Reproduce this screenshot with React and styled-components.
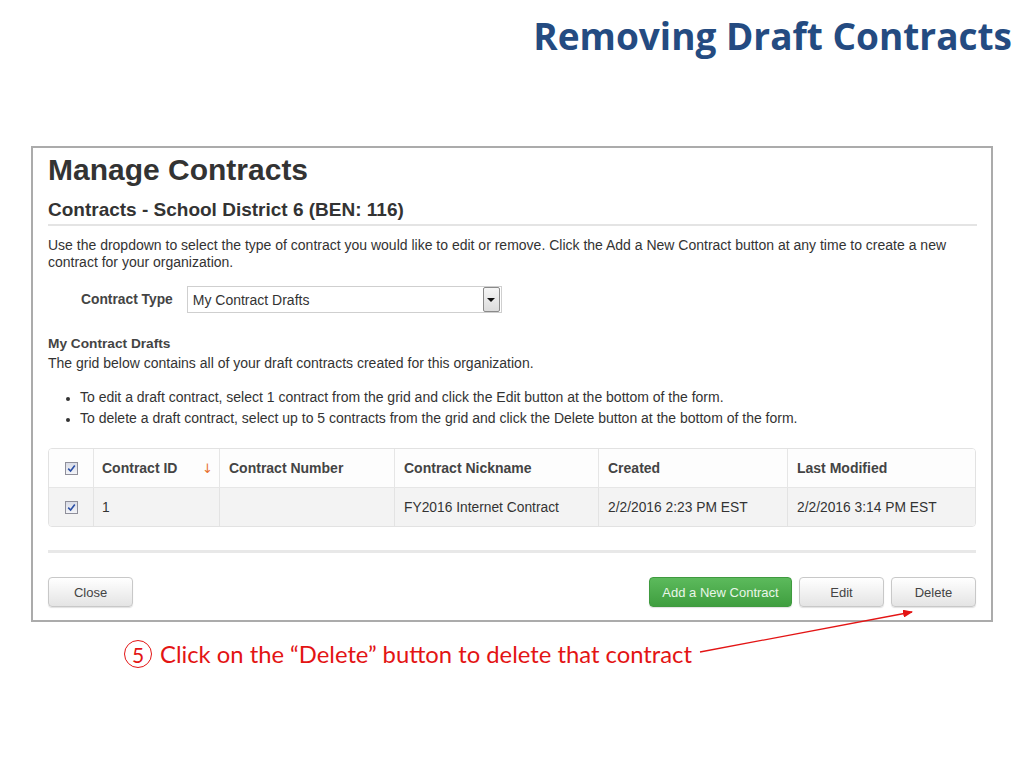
import React from 'react';
import styled, { createGlobalStyle } from 'styled-components';

const Global = createGlobalStyle`
  html, body { margin: 0; padding: 0; background: #fff; }
  body {
    width: 1024px; height: 768px; overflow: hidden;
    font-family: "Liberation Sans", Arial, sans-serif;
    color: #333;
  }
  * { box-sizing: border-box; }
`;

const Slide = styled.div`
  position: relative;
  width: 1024px;
  height: 768px;
  display: flex;
  flex-direction: column;
`;

const SlideTitle = styled.h1`
  margin: 0;
  padding: 14px 12px 0 0;
  text-align: right;
  font-family: "Open Sans", Lato, sans-serif;
  font-weight: 700;
  font-size: 37px;
  line-height: 43px;
  color: #244b81;
`;

const Frame = styled.div`
  margin: 89px 0 0 31px;
  width: 962px;
  height: 476px;
  border: 2px solid #ababab;
  padding: 5px 14px 0 15px;
  display: flex;
  flex-direction: column;
`;

const PageHeading = styled.h2`
  margin: 0;
  font-size: 30px;
  line-height: 34px;
  font-weight: 700;
  color: #333;
`;

const SubHeading = styled.h3`
  margin: 12px 0 0;
  font-size: 19px;
  line-height: 22px;
  font-weight: 700;
  color: #333;
  padding-bottom: 3px;
  border-bottom: 2px solid #e4e4e4;
`;

const Para = styled.p`
  margin: ${p => p.$mt || 0}px 0 0;
  font-size: 14px;
  line-height: 17px;
  color: #333;
`;

const TypeRow = styled.div`
  display: flex;
  align-items: center;
  gap: 14px;
  margin-top: 15px;
  padding-left: 33px;
`;

const FieldLabel = styled.label`
  font-size: 13.8px;
  font-weight: 700;
  color: #444;
`;

const SelectBox = styled.div`
  width: 315px;
  height: 27px;
  border: 1px solid #cfcfcf;
  display: flex;
  align-items: center;
  justify-content: space-between;
  padding: 0 1px 0 5px;
  font-size: 14px;
  color: #333;
  background: #fff;
`;

const SelectArrow = styled.span`
  width: 17px;
  height: 25px;
  border: 1px solid #8a8a8a;
  border-radius: 2px;
  background: linear-gradient(#f6f6f6, #dcdcdc);
  display: flex;
  align-items: center;
  justify-content: center;
  &::after {
    content: "";
    border-left: 4px solid transparent;
    border-right: 4px solid transparent;
    border-top: 4px solid #111;
  }
`;

const SectionTitle = styled.div`
  margin-top: 22px;
  font-size: 13.7px;
  line-height: 17px;
  font-weight: 700;
  color: #444;
`;

const BulletList = styled.ul`
  margin: 15px 0 0;
  padding: 0 0 0 32px;
  font-size: 14px;
  line-height: 21px;
  color: #333;
  li::marker { font-size: 12px; }
`;

const Table = styled.table`
  margin-top: 19px;
  width: 928px;
  border-collapse: separate;
  border-spacing: 0;
  border: 1px solid #e2e2e2;
  border-radius: 4px;
  table-layout: fixed;
  overflow: hidden;
`;

const Th = styled.th`
  height: 39px;
  padding: 0 0 0 ${p => p.$pl ?? 9}px;
  text-align: left;
  font-size: 14px;
  font-weight: 700;
  color: #444;
  background: #fdfdfd;
  border-left: ${p => (p.$first ? 'none' : '1px solid #e6e6e6')};
  border-bottom: 1px solid #e6e6e6;
`;

const Td = styled.td`
  height: 38px;
  padding: 0 0 0 ${p => p.$pl ?? 9}px;
  font-size: 13.8px;
  color: #333;
  background: #f3f3f3;
  border-left: ${p => (p.$first ? 'none' : '1px solid #e3e3e3')};
`;

const HeadInner = styled.div`
  display: flex;
  align-items: center;
  justify-content: space-between;
  padding-right: 6px;
`;

const SortArrow = styled.span`
  color: #e8702f;
  font-weight: 400;
  font-family: "DejaVu Sans", sans-serif;
  font-size: 13px;
`;

const CheckCell = styled.div`
  display: flex;
  justify-content: center;
  align-items: center;
`;

const Check = styled.span`
  width: 13px;
  height: 13px;
  border: 1px solid #8f8f9a;
  background: linear-gradient(#d9dce6, #f3f4f8);
  display: flex;
  align-items: center;
  justify-content: center;
`;

const Divider = styled.div`
  margin-top: 23px;
  height: 3px;
  width: 928px;
  background: #e8e8e8;
`;

const ButtonBar = styled.div`
  margin-top: 24px;
  width: 928px;
  display: flex;
  justify-content: space-between;
`;

const ButtonGroup = styled.div`
  display: flex;
  gap: 7px;
`;

const Button = styled.button`
  height: 30px;
  width: ${p => p.$w || 85}px;
  border-radius: 4px;
  border: 1px solid ${p => (p.$primary ? '#3f9a3f' : '#c8c8c8')};
  background: ${p =>
    p.$primary
      ? 'linear-gradient(#5cba5c, #3f9e3f)'
      : 'linear-gradient(#ffffff, #e4e4e4)'};
  color: ${p => (p.$primary ? '#e9f6e9' : '#444')};
  font-family: "Liberation Sans", Arial, sans-serif;
  font-size: 13px;
  box-shadow: 0 1px 1px rgba(0, 0, 0, 0.12);
  padding: 0;
  cursor: pointer;
`;

const Annotation = styled.div`
  margin-top: 17px;
  padding-left: 124px;
  display: flex;
  align-items: center;
  gap: 8px;
  font-family: Lato, "Open Sans", sans-serif;
  font-size: 23.8px;
  color: #e31414;
  line-height: 30px;
`;

const StepCircle = styled.span`
  width: 28px;
  height: 28px;
  border: 1.5px solid #e31414;
  border-radius: 50%;
  display: flex;
  align-items: center;
  justify-content: center;
  font-size: 21px;
  line-height: 1;
`;

const ArrowSvg = styled.svg`
  position: absolute;
  left: 0;
  top: 0;
  pointer-events: none;
`;

const CheckMark = () => (
  <svg width="9" height="9" viewBox="0 0 9 9">
    <path d="M1.2 4.6 L3.6 7 L7.8 1.6" fill="none" stroke="#2b4fa6" strokeWidth="1.6" />
  </svg>
);

const columns = [
  { key: 'cb', w: 44 },
  { key: 'id', w: 126, label: 'Contract ID', sort: true },
  { key: 'num', w: 175, label: 'Contract Number' },
  { key: 'nick', w: 204, label: 'Contract Nickname' },
  { key: 'created', w: 189, label: 'Created' },
  { key: 'mod', w: 188, label: 'Last Modified' },
];

const rows = [
  { id: '1', num: '', nick: 'FY2016 Internet Contract', created: '2/2/2016 2:23 PM EST', mod: '2/2/2016 3:14 PM EST' },
];

export default function App() {
  return (
    <Slide>
      <Global />
      <SlideTitle>Removing Draft Contracts</SlideTitle>
      <Frame>
        <PageHeading>Manage Contracts</PageHeading>
        <SubHeading>Contracts - School District 6 (BEN: 116)</SubHeading>
        <Para $mt={11}>
          Use the dropdown to select the type of contract you would like to edit or remove. Click the Add a New Contract button at any time to create a new contract for your organization.
        </Para>
        <TypeRow>
          <FieldLabel>Contract Type</FieldLabel>
          <SelectBox>
            <span>My Contract Drafts</span>
            <SelectArrow />
          </SelectBox>
        </TypeRow>
        <SectionTitle>My Contract Drafts</SectionTitle>
        <Para $mt={3}>The grid below contains all of your draft contracts created for this organization.</Para>
        <BulletList>
          <li>To edit a draft contract, select 1 contract from the grid and click the Edit button at the bottom of the form.</li>
          <li>To delete a draft contract, select up to 5 contracts from the grid and click the Delete button at the bottom of the form.</li>
        </BulletList>
        <Table>
          <colgroup>
            {columns.map(c => <col key={c.key} style={{ width: c.w }} />)}
          </colgroup>
          <thead>
            <tr>
              <Th $first $pl={0}><CheckCell><Check><CheckMark /></Check></CheckCell></Th>
              {columns.slice(1).map(c => (
                <Th key={c.key} $pl={c.key === 'id' ? 8 : 9}>
                  {c.sort ? (
                    <HeadInner><span>{c.label}</span><SortArrow>↓</SortArrow></HeadInner>
                  ) : c.label}
                </Th>
              ))}
            </tr>
          </thead>
          <tbody>
            {rows.map(r => (
              <tr key={r.id}>
                <Td $first $pl={0}><CheckCell><Check><CheckMark /></Check></CheckCell></Td>
                <Td $pl={8}>{r.id}</Td>
                <Td>{r.num}</Td>
                <Td>{r.nick}</Td>
                <Td>{r.created}</Td>
                <Td>{r.mod}</Td>
              </tr>
            ))}
          </tbody>
        </Table>
        <Divider />
        <ButtonBar>
          <Button>Close</Button>
          <ButtonGroup>
            <Button $primary $w={143}>Add a New Contract</Button>
            <Button>Edit</Button>
            <Button>Delete</Button>
          </ButtonGroup>
        </ButtonBar>
      </Frame>
      <Annotation>
        <StepCircle>5</StepCircle>
        <span>Click on the “Delete” button to delete that contract</span>
      </Annotation>
      <ArrowSvg width="1024" height="768" viewBox="0 0 1024 768">
        <defs>
          <marker id="ah" markerWidth="10" markerHeight="8" refX="9" refY="4" orient="auto" markerUnits="userSpaceOnUse">
            <path d="M0 0 L10 4 L0 8 Z" fill="#e31414" />
          </marker>
        </defs>
        <line x1="700" y1="652" x2="912" y2="612" stroke="#e31414" strokeWidth="1.3" markerEnd="url(#ah)" />
      </ArrowSvg>
    </Slide>
  );
}
